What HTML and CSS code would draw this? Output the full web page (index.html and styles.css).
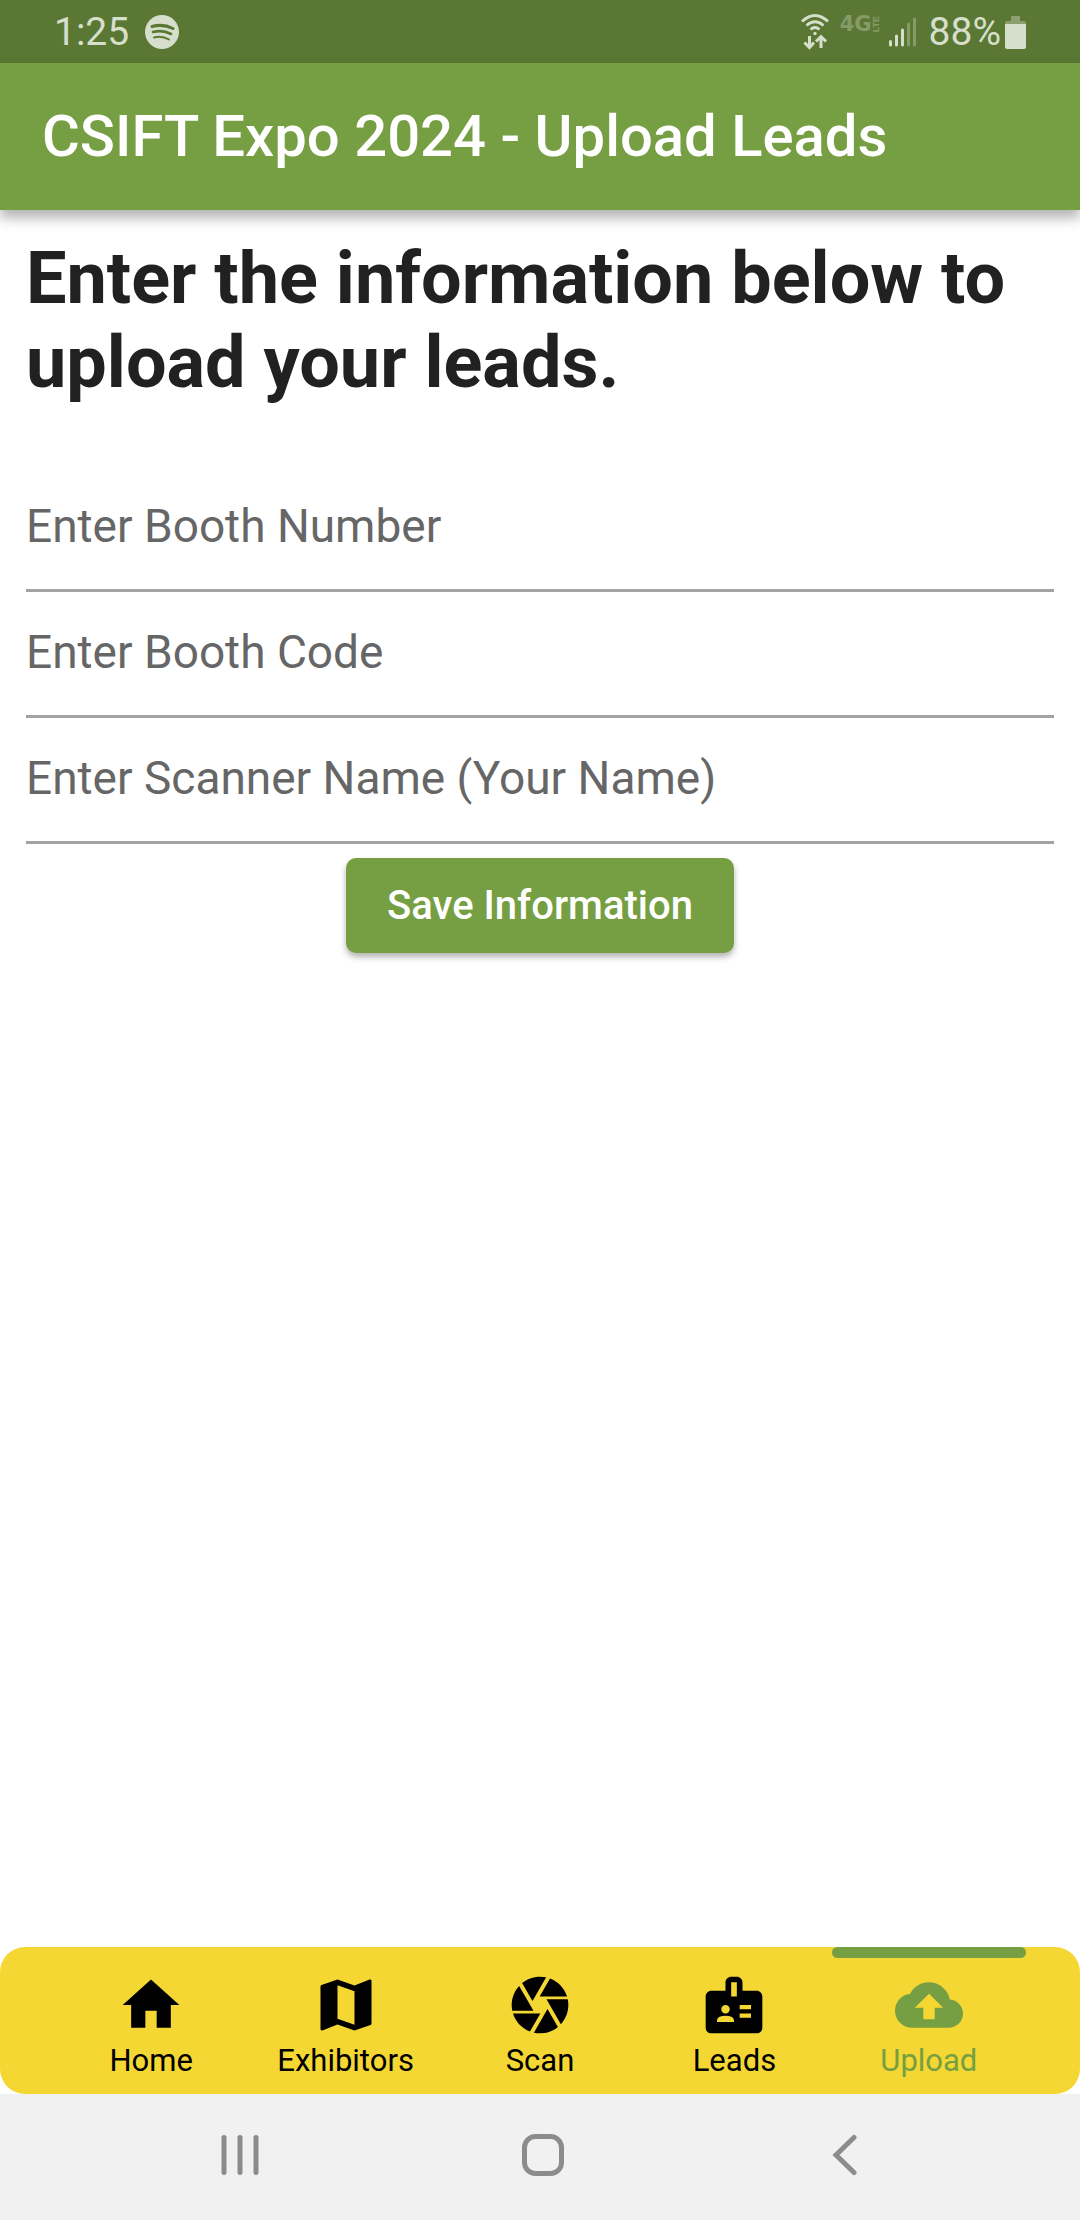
FILE: index.html
```html
<!DOCTYPE html>
<html lang="en">
<head>
<meta charset="utf-8">
<meta name="viewport" content="width=device-width, initial-scale=1">
<title>CSIFT Expo 2024 - Upload Leads</title>
<link rel="stylesheet" href="styles.css">
</head>
<body>
<div class="status-bar">
  <div class="status-group">
    <span>1:25</span>
    <svg class="spotify" viewBox="0 0 34 34" aria-hidden="true">
      <circle cx="17" cy="17" r="17" fill="currentColor"/>
      <g class="spotify-waves" fill="none" stroke-linecap="round">
        <path d="M7 11.500Q18 8.500 28 13.500" stroke-width="3"/>
        <path d="M8 17Q18 14.500 26 19" stroke-width="2.600"/>
        <path d="M9 22.500Q17 20.500 24 24.500" stroke-width="2"/>
      </g>
    </svg>
  </div>
  <div class="status-group status-right">
    <svg class="wifi" viewBox="0 0 28 36" aria-hidden="true" fill="none" stroke="currentColor">
      <path d="M1 7.500Q14-4.500 27 7.500M5.500 11.500Q14 4 22.500 11.500M9.500 15.500Q14 11.500 18.500 15.500" stroke-width="2.800"/>
      <circle cx="14" cy="19.500" r="1.700" fill="currentColor" stroke="none"/>
      <path d="M8.500 22V34M3.500 28.500L8.500 33.500L13 28.500M20 34V22.500M15 27.500L20 22.500L25 27.500" stroke-width="3"/>
    </svg>
    <span class="network"><span class="network-gen">4G</span><span class="network-type">LTE</span></span>
    <svg class="signal" viewBox="0 0 27 30" aria-hidden="true" fill="none" stroke="currentColor" stroke-width="3" stroke-linecap="round">
      <path d="M1.500 24.500V28M7.500 19V28M13.500 13V28"/>
      <path d="M19.500 7V28M25.500 2V28" opacity=".35"/>
    </svg>
    <span class="battery-level">88%</span>
    <svg class="battery" viewBox="0 0 21 33" aria-hidden="true" fill="currentColor">
      <path d="M6 0H15V5H19Q21 5 21 8H0Q0 5 2 5H6Z" opacity=".4"/>
      <path d="M0 8H21V31Q21 33 19 33H2Q0 33 0 31Z"/>
    </svg>
  </div>
</div>

<header class="app-bar">
  <h1 class="app-title">CSIFT Expo 2024 - Upload Leads</h1>
</header>

<main class="content">
  <h2 class="heading">Enter the information below to upload your leads.</h2>
  <form class="form">
    <input class="field" type="text" placeholder="Enter Booth Number" aria-label="Enter Booth Number">
    <input class="field" type="text" placeholder="Enter Booth Code" aria-label="Enter Booth Code">
    <input class="field" type="text" placeholder="Enter Scanner Name (Your Name)" aria-label="Enter Scanner Name (Your Name)">
    <button class="save" type="button">Save Information</button>
  </form>
</main>

<nav class="tabs">
  <a class="tab" href="#home">
    <svg class="tab-icon" viewBox="0 0 24 24" aria-hidden="true"><path d="M10 20v-6h4v6h5v-8h3L12 3 2 12h3v8z"/></svg>
    <span>Home</span>
  </a>
  <a class="tab" href="#exhibitors">
    <svg class="tab-icon" viewBox="0 0 24 24" aria-hidden="true"><path d="M20.500 3l-.160.030L15 5.100 9 3 3.360 4.900c-.210.070-.360.250-.360.480V20.500c0 .280.220.500.500.500l.160-.030L9 18.900l6 2.100 5.640-1.900c.210-.070.360-.250.360-.480V3.500c0-.280-.220-.500-.500-.500zM15 19l-6-2.110V5l6 2.110V19z"/></svg>
    <span>Exhibitors</span>
  </a>
  <a class="tab" href="#scan">
    <svg class="tab-icon" viewBox="0 0 24 24" aria-hidden="true"><path d="M9.400 10.500l4.770-8.260C13.470 2.090 12.750 2 12 2c-2.400 0-4.600.850-6.320 2.250l3.660 6.350.060-.100zM21.540 9c-.920-2.920-3.150-5.260-6-6.340L11.880 9h9.660zm.260 1h-7.490l.290.500 4.760 8.250C21 16.970 22 14.610 22 12c0-.690-.070-1.350-.200-2zM8.540 12l-3.900-6.750C3.010 7.030 2 9.390 2 12c0 .690.070 1.350.200 2h7.490l-1.150-2zm-6.080 3c.920 2.920 3.150 5.260 6 6.340L12.120 15H2.460zm11.270 0l-3.900 6.760c.700.150 1.420.240 2.170.240 2.400 0 4.600-.850 6.320-2.250l-3.660-6.350-.930 1.600z"/></svg>
    <span>Scan</span>
  </a>
  <a class="tab" href="#leads">
    <svg class="tab-icon" viewBox="0 0 24 24" aria-hidden="true"><path d="M20 7h-5V4c0-1.100-.900-2-2-2h-2c-1.100 0-2 .900-2 2v3H4c-1.100 0-2 .900-2 2v11c0 1.100.900 2 2 2h16c1.100 0 2-.900 2-2V9c0-1.100-.900-2-2-2zM9 12c.830 0 1.500.670 1.500 1.500S9.830 15 9 15s-1.500-.670-1.500-1.500S8.170 12 9 12zm3 6H6v-.430c0-.600.360-1.150.920-1.390C7.560 15.900 8.260 15.750 9 15.750s1.440.150 2.080.430c.560.240.920.780.920 1.390V18zm1-9h-2V4h2v5zm5 7.500h-4V15h4v1.500zm0-3h-4V12h4v1.500z"/></svg>
    <span>Leads</span>
  </a>
  <a class="tab tab-active" href="#upload" aria-current="page">
    <svg class="tab-icon" viewBox="0 0 24 24" aria-hidden="true"><path d="M19.350 10.040C18.670 6.590 15.640 4 12 4 9.110 4 6.600 5.640 5.350 8.040 2.340 8.360 0 10.910 0 14c0 3.310 2.690 6 6 6h13c2.760 0 5-2.240 5-5 0-2.640-2.050-4.780-4.650-4.960zM14 13v4h-4v-4H7l5-5 5 5h-3z"/></svg>
    <span>Upload</span>
  </a>
</nav>

<div class="system-nav">
  <button class="system-button" type="button" aria-label="Recent apps">
    <svg class="system-icon" viewBox="0 0 42 42"><path d="M4 3.500V38.500M20 3.500V38.500M36 3.500V38.500"/></svg>
  </button>
  <button class="system-button" type="button" aria-label="Home">
    <svg class="system-icon" viewBox="0 0 42 42"><rect x="2.500" y="2.500" width="37" height="37" rx="11"/></svg>
  </button>
  <button class="system-button" type="button" aria-label="Back">
    <svg class="system-icon" viewBox="0 0 42 42"><path d="M30 3.500L12 21L30 38.500"/></svg>
  </button>
</div>
</body>
</html>
```
FILE: styles.css
```css
* {
  box-sizing: border-box;
}

:root {
  --green: #769e42;
  --yellow: #f4d733;
}

body {
  display: flex;
  flex-direction: column;
  min-height: 100vh;
  margin: 0;
  background: #fff;
  color: #000;
  font-family: Roboto, sans-serif;
}

.status-bar {
  display: flex;
  justify-content: space-between;
  height: 63px;
  padding: 1px 54px 0;
  background: #5a7733;
  color: #d6dfcb;
  font-size: 39px;
}

.status-group {
  display: flex;
  align-items: center;
  gap: 16px;
}

.status-right {
  gap: 8px;
}

.spotify {
  width: 34px;
  height: 34px;
}

.spotify-waves {
  stroke: #5a7733;
}

.wifi {
  width: 28px;
  height: 36px;
}

.network {
  display: flex;
  align-items: center;
  margin: 0 0 16px 3px;
  color: #869b69;
}

.network-gen {
  font: 700 21px/24px "DejaVu Sans", sans-serif;
}

.network-type {
  font: 700 9px/9px "Liberation Sans", sans-serif;
  writing-mode: vertical-rl;
  transform: rotate(180deg);
}

.signal {
  width: 27px;
  height: 30px;
}

.battery-level {
  margin: 0 -4px 0 5px;
}

.battery {
  width: 21px;
  height: 33px;
}

.app-bar {
  display: flex;
  align-items: center;
  height: 147px;
  padding: 0 42px 2px;
  background: var(--green);
  box-shadow: 0 8px 12px rgba(0, 0, 0, .3);
}

.app-title {
  margin: 0;
  color: #fff;
  font-size: 58px;
  font-weight: 500;
  line-height: 66px;
}

.content {
  flex: 1;
  padding: 27px 26px;
}

.heading {
  margin: 0 0 61px;
  color: #212121;
  font-size: 72px;
  font-weight: 700;
  line-height: 84px;
}

.form {
  display: flex;
  flex-direction: column;
}

.field {
  width: 100%;
  height: 126px;
  padding: 0 0 4px;
  border: 0;
  border-bottom: 3px solid #a3a3a3;
  border-radius: 0;
  outline: 0;
  background: none;
  color: #212121;
  font: 400 46px/56px Roboto, sans-serif;
}

.field::placeholder {
  color: #666;
  opacity: 1;
}

.save {
  align-self: center;
  margin-top: 14px;
  padding: 20px 41px 19px;
  border: 0;
  border-radius: 10px;
  background: var(--green);
  box-shadow: 0 4px 6px rgba(0, 0, 0, .3);
  color: #fff;
  font: 500 40px/56px Roboto, sans-serif;
}

.tabs {
  display: flex;
  height: 147px;
  padding: 0 54px;
  border-radius: 25px;
  background: var(--yellow);
}

.tab {
  position: relative;
  display: flex;
  flex: 1;
  flex-direction: column;
  align-items: center;
  padding-top: 24px;
  color: #000;
  font-size: 31px;
  line-height: 44px;
  text-decoration: none;
}

.tab-active {
  color: var(--green);
}

.tab-active::before {
  content: "";
  position: absolute;
  top: 0;
  left: 0;
  width: 100%;
  height: 11px;
  border-radius: 6px;
  background: var(--green);
}

.tab-icon {
  width: 68px;
  height: 68px;
  fill: currentColor;
}

.system-nav {
  display: flex;
  height: 126px;
  padding: 0 84px 4px 90px;
  background: #f1f1f1;
}

.system-button {
  display: flex;
  flex: 1;
  align-items: center;
  justify-content: center;
  padding: 0;
  border: 0;
  background: none;
}

.system-icon {
  width: 42px;
  height: 42px;
  fill: none;
  stroke: #8c8c8c;
  stroke-width: 5;
  stroke-linecap: round;
}
```
